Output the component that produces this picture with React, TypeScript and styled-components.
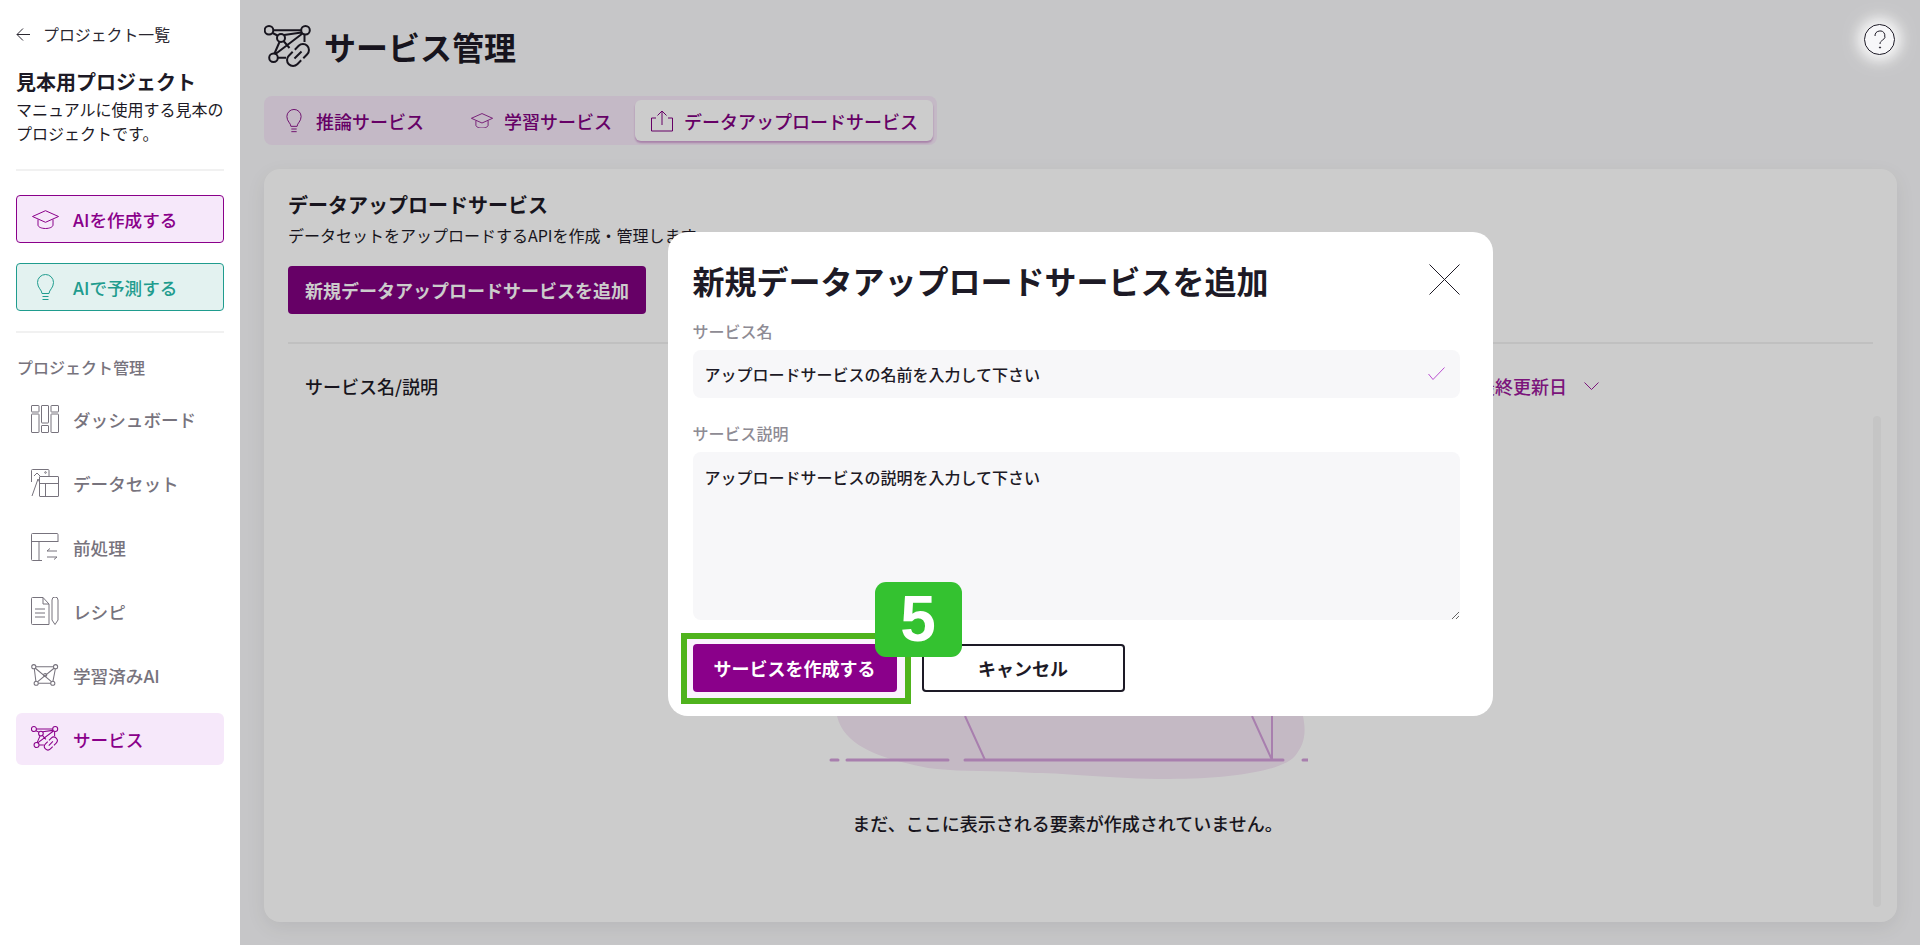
// Service management page with the "add upload service" modal open
import React from 'react';
import styled, { createGlobalStyle } from 'styled-components';

const GlobalStyle = createGlobalStyle`
  html, body {
    margin: 0;
    padding: 0;
    background: #fff;
    overflow: hidden;
  }
  body, button, input, textarea {
    font-family: "Noto Sans CJK JP", "Noto Sans", sans-serif;
  }
  * {
    box-sizing: border-box;
  }
`;

const Shell = styled.div`
  display: flex;
  height: 945px;
`;

const Sidebar = styled.aside`
  position: relative;
  z-index: 3;
  flex: 0 0 240px;
  padding: 21px 16px 0;
  background: #fff;
  color: #1d1a26;
`;

const BackLink = styled.a`
  display: flex;
  align-items: center;
  gap: 13px;
  height: 26px;
  font-size: 15.9px;
  color: #2a2730;
  svg {
    flex: 0 0 14px;
  }
`;

const ProjectName = styled.h2`
  margin: 20px 0 0;
  font-size: 20px;
  line-height: 30px;
  font-weight: 700;
`;

const ProjectText = styled.p`
  margin: 0;
  font-size: 16px;
  line-height: 24px;
  width: 208px;
`;

const Divider = styled.hr<{ $top: number; $bottom: number }>`
  margin: ${({ $top }) => $top}px 0 ${({ $bottom }) => $bottom}px;
  border: 0;
  height: 2px;
  background: #f1f1f1;
`;

const ActionButton = styled.button<{ $color: string; $bg: string }>`
  display: flex;
  align-items: center;
  width: 100%;
  height: 48px;
  margin-bottom: 20px;
  padding: 0;
  background: ${({ $bg }) => $bg};
  border: 1px solid ${({ $color }) => $color};
  border-radius: 4px;
  color: ${({ $color }) => $color};
  font-size: 17.6px;
  font-weight: 500;
`;

const ActionIcon = styled.span`
  flex: 0 0 56px;
  display: flex;
  justify-content: center;
`;

const SectionLabel = styled.div`
  margin: 22px 0 14px 1px;
  font-size: 16px;
  line-height: 24px;
  font-weight: 500;
  color: #77737d;
`;

const NavList = styled.nav`
  display: flex;
  flex-direction: column;
  gap: 12px;
`;

const NavItem = styled.a<{ $active?: boolean }>`
  display: flex;
  align-items: center;
  height: 52px;
  border-radius: 6px;
  font-size: 17.6px;
  font-weight: 500;
  color: ${({ $active }) => ($active ? '#8a008a' : '#77737d')};
  background: ${({ $active }) => ($active ? '#f6e8fa' : 'transparent')};
`;

const NavIcon = styled.span`
  flex: 0 0 57px;
  display: flex;
  justify-content: center;
  padding-left: 1px;
`;

const Main = styled.main`
  flex: 1;
  min-width: 0;
  padding: 22px 23px 23px 24px;
  display: flex;
  flex-direction: column;
  background: #f8f8fa;
`;

const PageHeader = styled.header`
  display: flex;
  align-items: center;
  gap: 12px;
  height: 48px;
  margin-bottom: 26px;
  color: #1d1a26;
`;

const PageTitle = styled.h1`
  margin: 0;
  font-size: 32px;
  font-weight: 700;
  line-height: 48px;
`;

const TabBar = styled.div`
  align-self: flex-start;
  display: flex;
  padding: 4px;
  margin-bottom: 24px;
  background: #f6e8f8;
  border-radius: 8px;
`;

const Tab = styled.div<{ $active?: boolean; $left: number; $right: number }>`
  display: flex;
  align-items: center;
  gap: 10px;
  height: 41px;
  padding: 0 ${({ $right }) => $right}px 0 ${({ $left }) => $left}px;
  font-size: 18px;
  font-weight: 500;
  color: #800080;
  border-radius: 6px;
  background: ${({ $active }) => ($active ? '#fff' : 'transparent')};
  box-shadow: ${({ $active }) => ($active ? '0 2px 2px rgba(128, 0, 128, 0.3)' : 'none')};
  svg {
    flex: 0 0 24px;
  }
`;

const Card = styled.section`
  flex: 1;
  min-height: 0;
  display: flex;
  flex-direction: column;
  padding: 22px 16px 15px 24px;
  background: #fff;
  border-radius: 16px;
  box-shadow: 0 6px 20px rgba(0, 0, 0, 0.07);
  color: #1d1a26;
`;

const CardTitle = styled.h3`
  margin: 0 0 4px;
  font-size: 20px;
  line-height: 28px;
  font-weight: 700;
`;

const CardText = styled.p`
  margin: 0 0 19px;
  font-size: 16px;
  line-height: 24px;
`;

const AddButton = styled.button`
  align-self: flex-start;
  height: 48px;
  padding: 0 17px;
  background: #800080;
  border: 0;
  border-radius: 4px;
  color: #fff;
  font-size: 18px;
  font-weight: 700;
`;

const TableHead = styled.div`
  display: flex;
  align-items: center;
  justify-content: space-between;
  height: 73px;
  margin: 28px 8px 0 0;
  padding: 12px 274px 0 17px;
  border-top: 2px solid #f1f1f1;
  font-size: 18px;
  font-weight: 500;
`;

const SortLabel = styled.span`
  display: flex;
  align-items: center;
  gap: 17px;
  color: #9a1a9a;
`;

const TableBody = styled.div`
  flex: 1;
  min-height: 0;
  display: flex;
  padding-top: 1px;
`;

const EmptyState = styled.div`
  flex: 1;
  display: flex;
  flex-direction: column;
  align-items: center;
  margin-right: 26px;
  padding-top: 54px;
`;

const EmptyText = styled.p`
  margin: 21px 0 0;
  font-size: 18px;
  line-height: 24px;
  font-weight: 500;
`;

const ScrollTrack = styled.div`
  flex: 0 0 8px;
  background: #f7f7f7;
  border-radius: 4px;
`;

const Overlay = styled.div`
  position: fixed;
  z-index: 2;
  top: 0;
  left: 240px;
  right: 0;
  height: 945px;
  padding-top: 2px;
  display: flex;
  align-items: center;
  justify-content: center;
  background: rgba(0, 0, 0, 0.2);
`;

const Modal = styled.div`
  width: 825px;
  height: 484px;
  padding: 24px 33px 24px 25px;
  background: #fff;
  border-radius: 20px;
  color: #1d1a26;
`;

const ModalHeader = styled.div`
  display: flex;
  align-items: center;
  justify-content: space-between;
  height: 48px;
  margin-bottom: 16px;
`;

const ModalTitle = styled.h2`
  margin: 0;
  font-size: 32px;
  font-weight: 700;
  line-height: 48px;
`;

const FieldLabel = styled.label`
  display: block;
  margin-bottom: 8px;
  font-size: 16px;
  line-height: 22px;
  font-weight: 500;
  color: #8e8b94;
`;

const InputBox = styled.div`
  display: flex;
  align-items: center;
  height: 48px;
  margin-bottom: 24px;
  padding: 0 15px 0 12px;
  background: #f7f7f9;
  border-radius: 8px;
`;

const TextInput = styled.input`
  flex: 1;
  min-width: 0;
  padding: 0;
  border: 0;
  outline: 0;
  background: transparent;
  color: #1d1a26;
  font-size: 16px;
  font-weight: 500;
`;

const TextArea = styled.textarea`
  display: block;
  width: 100%;
  height: 168px;
  margin-bottom: 24px;
  padding: 13px 12px;
  background: #f7f7f9;
  border: 0;
  border-radius: 8px;
  outline: 0;
  color: #1d1a26;
  font-size: 16px;
  line-height: 24px;
  font-weight: 500;
`;

const ButtonRow = styled.div`
  display: flex;
  gap: 25px;
`;

const CreateWrap = styled.div`
  position: relative;
  width: 204px;
  height: 48px;
`;

const Highlight = styled.span`
  position: absolute;
  top: -11px;
  left: -12px;
  right: -14px;
  bottom: -12px;
  background: #faf2fd;
  border: 6px solid #4fb31d;
`;

const StepBadge = styled.span`
  position: absolute;
  z-index: 2;
  top: -62px;
  left: 182px;
  width: 87px;
  height: 75px;
  display: flex;
  align-items: center;
  justify-content: center;
  background: #34c230;
  border-radius: 11px;
  color: #fff;
  font-family: "Liberation Sans", Arial, sans-serif;
  font-size: 64px;
  font-weight: 700;
`;

const CreateButton = styled.button`
  position: relative;
  width: 100%;
  height: 48px;
  background: #8a008a;
  border: 0;
  border-radius: 4px;
  color: #fff;
  font-size: 18px;
  font-weight: 700;
`;

const CancelButton = styled.button`
  width: 203px;
  height: 48px;
  background: #fff;
  border: 2px solid #1d1a26;
  border-radius: 4px;
  color: #1d1a26;
  font-size: 18px;
  font-weight: 700;
`;

const HelpButton = styled.button`
  position: fixed;
  z-index: 4;
  top: 24px;
  right: 25px;
  width: 31px;
  height: 31px;
  padding: 0;
  display: flex;
  align-items: center;
  justify-content: center;
  background: #f7f7f9;
  border: 1.5px solid #1d1a26;
  border-radius: 50%;
  color: #1d1a26;
  box-shadow: 0 0 14px 6px rgba(255, 255, 255, 0.9);
`;

const Stroke = styled.svg`
  display: block;
  fill: none;
  stroke: currentColor;
  stroke-width: 1;
`;

const ArrowIcon = () => (
  <Stroke width="14" height="13" viewBox="0 0 14 13">
    <path d="M14 6.5H1M7 .5l-6 6 6 6" />
  </Stroke>
);

const CapIcon = ({ w = 27 }: { w?: number }) => (
  <Stroke width={w} height={(w * 19) / 27} viewBox="0 0 27 19">
    <path d="M.5 6.5 13.5.7l13 5.8-13 5.8Z" />
    <path d="M6 9.5V15c0 2 3.5 3.5 7.5 3.5S21 17 21 15V9.5" />
  </Stroke>
);

const BulbIcon = ({ h = 27 }: { h?: number }) => (
  <Stroke width={(h * 17) / 27} height={h} viewBox="0 0 17 27">
    <path d="M5 19.5c0-3.5-4.5-5.5-4.5-11a8 8 0 0 1 16 0c0 5.500-4.500 7.500-4.500 11Z" />
    <path d="M5.500 22.500h6M5.500 25.500h6" />
  </Stroke>
);

const UploadIcon = () => (
  <Stroke width="24" height="22" viewBox="0 0 24 22">
    <path d="M12 15V1M7.500 5.500 12 1l4.500 4.500" />
    <path d="M6 8H1.500v13h21V8H18" />
  </Stroke>
);

const DashboardIcon = () => (
  <Stroke width="28" height="28" viewBox="0 0 28 28">
    <rect x=".5" y=".5" width="7.5" height="6.5" rx=".5" />
    <rect x=".5" y="9" width="7.5" height="18.5" rx=".5" />
    <rect x="10.5" y=".5" width="7" height="17.5" rx=".5" />
    <rect x="10.5" y="20.5" width="7" height="7" rx=".5" />
    <rect x="20" y=".5" width="7.5" height="6.5" rx=".5" />
    <rect x="20" y="9" width="7.5" height="18.5" rx=".5" />
  </Stroke>
);

const DatasetIcon = () => (
  <Stroke width="28" height="28" viewBox="0 0 28 28">
    <path d="M18 7V1.500a1 1 0 0 0-1-1H1.500a1 1 0 0 0-1 1V13" />
    <path d="M1 27 7 10l1.500 3M3 7l3-3 3 3" />
    <circle cx="14.5" cy="3.5" r=".8" />
    <rect x="8.5" y="7.5" width="19" height="20" rx=".5" />
    <path d="M8.500 14.500h19M14.500 14.500v13" />
  </Stroke>
);

const PreprocessIcon = () => (
  <Stroke width="28" height="28" viewBox="0 0 28 28">
    <path d="M27 9V1.500a1 1 0 0 0-1-1H1.500a1 1 0 0 0-1 1v25a1 1 0 0 0 1 1H11" />
    <path d="M.5 8.500H27M8 8.500v19" />
    <path d="M26 18H16l3-2.500M16 24h10l-3 2.500" />
  </Stroke>
);

const RecipeIcon = () => (
  <Stroke width="28" height="28" viewBox="0 0 28 28">
    <path d="M.5 1.500a1 1 0 0 1 1-1H12L18 7v20.500H1.500a1 1 0 0 1-1-1Z" />
    <path d="M12 .5V7h6M4 12h10M4 16h10M4 20h10" />
    <path d="M21 3a3 3 0 0 1 6 0v20l-3 4.500-3-4.500Z" />
  </Stroke>
);

const ModelIcon = () => (
  <Stroke width="28" height="23" viewBox="0 0 27 22">
    <circle cx="2.7" cy="2.5" r="2" />
    <circle cx="23.7" cy="2.5" r="2" />
    <circle cx="21" cy="18.5" r="2" />
    <circle cx="5" cy="18.5" r="2" />
    <circle cx="13.7" cy="10.5" r="1.5" />
    <path d="M4.700 2.500h17M4.200 4l15.500 13M22.200 4 6.500 17M3.200 4.500l1.500 12M23.500 4.500 21.200 16.500M7 18.500h12" />
  </Stroke>
);

const ServiceIcon = ({ w = 28 }: { w?: number }) => (
  <Stroke width={w} height={(w * 43) / 48} viewBox="4 8 48 43">
    <g strokeWidth={w > 40 ? 2 : 1.8}>
      <circle cx="9" cy="13.3" r="4.3" />
      <circle cx="45.5" cy="13.3" r="4.3" />
      <circle cx="21" cy="21" r="4" />
      <circle cx="13.5" cy="40.7" r="4.3" />
      <path d="M13.300 13.300h28M12.500 16l5 2.500M23.500 24l6 7M24 18l17.500-2.500M42.500 16.500 15.500 37M19.500 25 14.500 36.500M18 40.700h8M44.500 18v7" />
      <g transform="rotate(-45 38 38)">
        <path d="M36.500 32H31a6 6 0 0 0 0 12h5.500M39.500 32H45a6 6 0 0 1 0 12h-5.500M33 38h10" />
      </g>
    </g>
  </Stroke>
);

const ChevronIcon = () => (
  <Stroke width="15" height="8" viewBox="0 0 15 8">
    <path d="M.5.5 7.500 7.500 14.500.5" />
  </Stroke>
);

const CloseIcon = () => (
  <Stroke width="31" height="31" viewBox="0 0 31 31">
    <path d="M.5.5l30 30M30.500.5l-30 30" />
  </Stroke>
);

const CheckMark = styled(Stroke)`
  color: #b94fd0;
`;

const HelpGlyph = () => (
  <Stroke width="14" height="20" viewBox="0 0 14 20">
    <path d="M2 6a5 5 0 1 1 7.500 4.300C8 11.200 7 12 7 14" />
    <circle cx="7" cy="17.5" r=".6" fill="currentColor" />
  </Stroke>
);

const Illustration = styled.svg`
  display: block;
  flex: 0 0 auto;
`;

const EmptyDrawing = () => (
  <Illustration width="480" height="320" viewBox="-2 0 480 320">
    <path
      fill="#f6e8f6"
      d="M7 246C0 120 100 40 240 30c160-10 250 90 233 216 4 20 0 30-8 40-12 14-60 23-126 23-60 0-99-6-134-6-45-3-80-1-107-5-38-8-83-18-91-52Z"
    />
    <g fill="none" stroke="#d39fda" strokeWidth="2">
      <path d="M135 246 155 290M422 246 442 290M442 240V290" />
      <path strokeWidth="3" strokeLinecap="round" d="M1 290H8M17 290H118M135 290H453M473 290H480" />
    </g>
  </Illustration>
);

const navItems = [
  { label: 'ダッシュボード', icon: <DashboardIcon /> },
  { label: 'データセット', icon: <DatasetIcon /> },
  { label: '前処理', icon: <PreprocessIcon /> },
  { label: 'レシピ', icon: <RecipeIcon /> },
  { label: '学習済みAI', icon: <ModelIcon /> },
  { label: 'サービス', icon: <ServiceIcon />, active: true },
];

export default function App() {
  return (
    <>
      <GlobalStyle />
      <Shell>
        <Sidebar>
          <BackLink>
            <ArrowIcon />
            プロジェクト一覧
          </BackLink>
          <ProjectName>見本用プロジェクト</ProjectName>
          <ProjectText>マニュアルに使用する見本のプロジェクトです。</ProjectText>
          <Divider $top={24} $bottom={24} />
          <ActionButton $color="#8a008a" $bg="#f6e8fa">
            <ActionIcon>
              <CapIcon />
            </ActionIcon>
            AIを作成する
          </ActionButton>
          <ActionButton $color="#1f9c8e" $bg="#e3f2f0">
            <ActionIcon>
              <BulbIcon />
            </ActionIcon>
            AIで予測する
          </ActionButton>
          <Divider $top={2} $bottom={0} />
          <SectionLabel>プロジェクト管理</SectionLabel>
          <NavList>
            {navItems.map((item) => (
              <NavItem key={item.label} $active={item.active}>
                <NavIcon>{item.icon}</NavIcon>
                {item.label}
              </NavItem>
            ))}
          </NavList>
        </Sidebar>

        <Main>
          <PageHeader>
            <ServiceIcon w={48} />
            <PageTitle>サービス管理</PageTitle>
          </PageHeader>
          <TabBar>
            <Tab $left={14} $right={24}>
              <BulbIcon h={24} />
              推論サービス
            </Tab>
            <Tab $left={22} $right={23}>
              <CapIcon w={22} />
              学習サービス
            </Tab>
            <Tab $active $left={15} $right={15}>
              <UploadIcon />
              データアップロードサービス
            </Tab>
          </TabBar>
          <Card>
            <CardTitle>データアップロードサービス</CardTitle>
            <CardText>データセットをアップロードするAPIを作成・管理します。</CardText>
            <AddButton>新規データアップロードサービスを追加</AddButton>
            <TableHead>
              <span>サービス名/説明</span>
              <SortLabel>
                最終更新日
                <ChevronIcon />
              </SortLabel>
            </TableHead>
            <TableBody>
              <EmptyState>
                <EmptyDrawing />
                <EmptyText>まだ、ここに表示される要素が作成されていません。</EmptyText>
              </EmptyState>
              <ScrollTrack />
            </TableBody>
          </Card>
        </Main>
      </Shell>

      <Overlay>
        <Modal>
          <ModalHeader>
            <ModalTitle>新規データアップロードサービスを追加</ModalTitle>
            <CloseIcon />
          </ModalHeader>
          <FieldLabel>サービス名</FieldLabel>
          <InputBox>
            <TextInput readOnly value="アップロードサービスの名前を入力して下さい" />
            <CheckMark width="17" height="13" viewBox="0 0 17 13">
              <path d="M.5 7 5 12.500 16.500.5" />
            </CheckMark>
          </InputBox>
          <FieldLabel>サービス説明</FieldLabel>
          <TextArea readOnly value="アップロードサービスの説明を入力して下さい" />
          <ButtonRow>
            <CreateWrap>
              <Highlight />
              <CreateButton>サービスを作成する</CreateButton>
              <StepBadge>5</StepBadge>
            </CreateWrap>
            <CancelButton>キャンセル</CancelButton>
          </ButtonRow>
        </Modal>
      </Overlay>

      <HelpButton aria-label="help">
        <HelpGlyph />
      </HelpButton>
    </>
  );
}
